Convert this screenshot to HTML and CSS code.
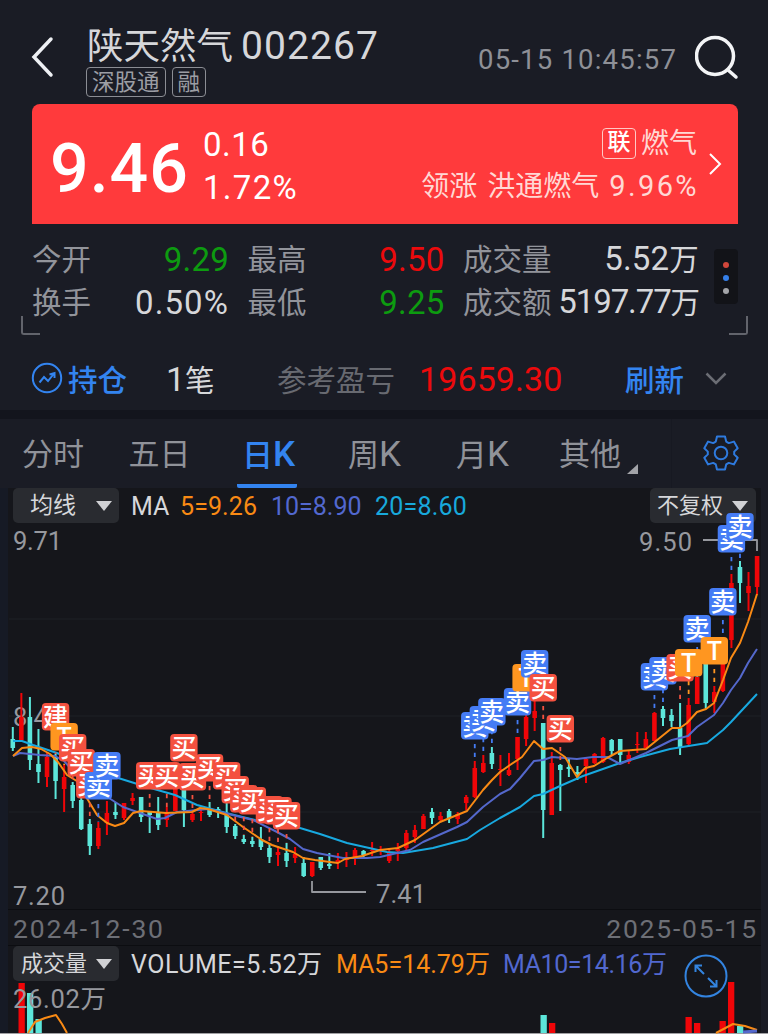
FILE: index.html
```html
<!DOCTYPE html>
<html lang="zh-CN">
<head>
  <meta charset="UTF-8" />
  <meta name="viewport" content="width=device-width, initial-scale=1.0"/>
  <title>陕天然气 002267</title>
  <link rel="stylesheet" href="styles.css">
</head>
<body>
  <header class="header">
    <svg class="back" width="24" height="42" viewBox="0 0 24 42"><path d="M20 3L3 21L20 39"/></svg>
    <div class="stock">
      <div class="stock-name">陕天然气<span class="code">002267</span></div>
      <div class="badges"><span class="badge">深股通</span><span class="badge">融</span></div>
    </div>
    <div class="time">05-15 10:45:57</div>
    <svg class="search" width="46" height="46" viewBox="0 0 46 46"><circle cx="20" cy="21" r="18.5"/><path d="M33 35L41 42"/></svg>
  </header>

  <section class="price-card">
    <div class="price">9.46</div>
    <div class="change"><div>0.16</div><div class="percent">1.72%</div></div>
    <div class="sector">
      <div class="sector-name"><span class="link-badge">联</span>燃气</div>
      <div class="leader"><span>领涨</span><span>洪通燃气</span><span class="leader-rate">9.96%</span></div>
    </div>
    <svg class="card-arrow" width="14" height="24" viewBox="0 0 14 24"><path d="M2 2L12 12L2 22"/></svg>
  </section>

  <section class="stats">
    <div class="stat"><span>今开</span><b class="green">9.29</b></div>
    <div class="stat"><span>最高</span><b class="red">9.50</b></div>
    <div class="stat"><span>成交量</span><b>5.52<i>万</i></b></div>
    <div class="stat"><span>换手</span><b class="rate">0.50%</b></div>
    <div class="stat"><span>最低</span><b class="green">9.25</b></div>
    <div class="stat"><span>成交额</span><b class="amount">5197.77<i>万</i></b></div>
    <div class="dots"><i></i><i></i><i></i></div>
    <div class="corner left"></div>
    <div class="corner right"></div>
  </section>

  <section class="position">
    <svg class="trend" width="32" height="32" viewBox="0 0 32 32"><circle cx="16" cy="16" r="14.2"/><path d="M8.5 20.5L13 15L17 19L23 11.5M18.5 12.5L23.5 11L23.5 16"/></svg>
    <span class="hold">持仓</span>
    <span class="count"><b>1</b>笔</span>
    <span class="profit-label">参考盈亏</span>
    <span class="profit">19659.30</span>
    <span class="refresh">刷新</span>
    <svg class="down" width="22" height="13" viewBox="0 0 22 13"><path d="M1.5 1.5L11 11L20.5 1.5"/></svg>
  </section>

  <nav class="tabs">
    <span class="tab">分时</span>
    <span class="tab">五日</span>
    <span class="tab active">日<b>K</b></span>
    <span class="tab">周<b>K</b></span>
    <span class="tab">月<b>K</b></span>
    <span class="tab more">其他</span>
    <svg class="gear" width="36" height="36" viewBox="0 0 36 36">
      <path d="M14 1.5H22L23.200 6.6L25.800 8.1L30.900 6.6L34.700 13.2L31.200 16.600V19.400L34.700 22.800L30.900 29.400L25.800 27.900L23.200 29.400L22 34.500H14L12.800 29.400L10.200 27.900L5.100 29.400L1.300 22.800L4.800 19.400V16.600L1.300 13.200L5.100 6.600L10.200 8.1L12.800 6.600Z"/>
      <circle cx="18" cy="18" r="6.3"/>
    </svg>
  </nav>

  <main class="charts">
    <section class="kline">
      <svg id="kline" width="768" height="421" viewBox="0 488 768 421"></svg>
      <div class="toolbar">
        <span class="select">均线</span>
        <span class="ma">MA</span>
        <span class="ma5">5=9.26</span>
        <span class="ma10">10=8.90</span>
        <span class="ma20">20=8.60</span>
        <span class="select adjust">不复权</span>
      </div>
      <svg id="marks" width="768" height="421" viewBox="0 488 768 421"></svg>
    </section>
    <div class="dates"><span>2024-12-30</span><span>2025-05-15</span></div>
    <section class="volume">
      <svg id="volume" width="768" height="88" viewBox="0 946 768 88"></svg>
      <div class="toolbar">
        <span class="select vol">成交量</span>
        <span class="v">VOLUME=5.52万</span>
        <span class="v5">MA5=14.79万</span>
        <span class="v10">MA10=14.16万</span>
      </div>
      <svg class="expand" width="44" height="44" viewBox="0 0 44 44"><circle cx="22" cy="22" r="20.5"/><path d="M20 20L11.5 11.5M11.5 18V11.5H18M24 24L32.5 32.5M32.5 26V32.5H26"/></svg>
    </section>
  </main>

  <script src="chart.js"></script>
</body>
</html>
```
FILE: styles.css
```css
* {
  box-sizing: border-box;
}
body {
  margin: 0;
  width: 768px;
  height: 1034px;
  overflow: hidden;
  background: #1a1c25;
  color: #d6d7da;
  font-family: Roboto, "Noto Sans CJK SC", sans-serif;
}
svg {
  display: block;
  fill: none;
}
b, i {
  font-weight: inherit;
  font-style: normal;
}
.header {
  display: flex;
  height: 104px;
  padding-left: 31px;
}
.back {
  margin-top: 36px;
  stroke: #eef0f4;
  stroke-width: 3.5;
  stroke-linecap: round;
}
.stock {
  margin-left: 31px;
  width: 392px;
  padding-top: 24px;
  white-space: nowrap;
}
.stock-name {
  height: 43px;
  line-height: 44px;
  padding-left: 1px;
  font-size: 36.5px;
}
.code {
  margin-left: 8px;
  font-size: 39px;
  letter-spacing: 1.1px;
}
.badges {
  display: flex;
  gap: 6px;
}
.badge {
  height: 30px;
  line-height: 28px;
  padding: 0 5px;
  border: 1.5px solid #8b8d94;
  border-radius: 4px;
  font-size: 22.5px;
  color: #9c9ea4;
}
.time {
  width: 217px;
  padding-top: 43px;
  line-height: 34px;
  font-size: 27.5px;
  letter-spacing: 1.2px;
  color: #8e9097;
  white-space: nowrap;
}
.search {
  margin-top: 35px;
  stroke: #f3f4f6;
  stroke-width: 3.5;
  stroke-linecap: round;
}
.price-card {
  display: flex;
  height: 120px;
  margin: 0 30px 0 32px;
  padding-left: 18px;
  border-radius: 8px 8px 0 0;
  background: #ff3a3c;
  color: #fff;
}
.price {
  width: 153px;
  padding-top: 5px;
  line-height: 120px;
  font-size: 68px;
  font-weight: 500;
  letter-spacing: 1px;
}
.change {
  padding-top: 19px;
  width: 140px;
  font-size: 33px;
  line-height: 43px;
  letter-spacing: 0.5px;
}
.percent {
  letter-spacing: 1.3px;
}
.sector {
  width: 354px;
  padding-top: 18px;
  font-size: 28px;
  line-height: 45px;
  color: #ffd8d4;
  white-space: nowrap;
}
.sector-name {
  display: flex;
  justify-content: flex-end;
  align-items: center;
  height: 42px;
}
.link-badge {
  width: 34px;
  height: 31px;
  margin-right: 5px;
  border: 1.5px solid #ffc9c5;
  border-radius: 4px;
  text-align: center;
  line-height: 27px;
  font-size: 23px;
  font-weight: 500;
  color: #fff;
}
.leader {
  display: flex;
  justify-content: flex-end;
  gap: 10px;
}
.leader-rate {
  margin-right: -2px;
  font-size: 29px;
  letter-spacing: 2.4px;
}
.card-arrow {
  margin: 48px 0 0 11px;
  stroke: #fff;
  stroke-width: 2;
}
.stats {
  position: relative;
  display: grid;
  grid-template-columns: 197px 197px 236px;
  grid-template-rows: 43px 43px;
  column-gap: 18.5px;
  height: 116px;
  padding: 14px 0 0 32px;
}
.stat {
  display: flex;
  justify-content: space-between;
  align-items: center;
  font-size: 29.5px;
  line-height: 43px;
  color: #92949b;
  white-space: nowrap;
}
.stat > span {
  padding-top: 1px;
}
.stat b {
  font-size: 33px;
  letter-spacing: 0.2px;
  color: #d6d7da;
}
.stat b i {
  font-size: 29.5px;
}
.stat .rate {
  letter-spacing: 1.1px;
}
.stat .amount {
  letter-spacing: -1.1px;
}
.stat .green {
  color: #0d9b10;
}
.stat .red, .profit {
  color: #ec0a0c;
}
.dots {
  position: absolute;
  left: 714px;
  top: 25px;
  width: 24px;
  height: 55px;
  padding-top: 13px;
  display: flex;
  flex-direction: column;
  align-items: center;
  gap: 7px;
  border-radius: 4px;
  background: #121318;
}
.dots i {
  width: 6px;
  height: 6px;
  border-radius: 50%;
  background: #d1473b;
}
.dots i:nth-child(2) {
  background: #357fe8;
}
.dots i:nth-child(3) {
  background: #a3a4a8;
}
.corner {
  position: absolute;
  bottom: 5px;
  width: 19px;
  height: 19px;
  border-bottom: 2px solid #62646c;
}
.corner.left {
  left: 21px;
  border-left: 2px solid #62646c;
  border-bottom-left-radius: 3px;
}
.corner.right {
  right: 20px;
  border-right: 2px solid #62646c;
  border-bottom-right-radius: 3px;
}
.position {
  display: flex;
  align-items: center;
  height: 70px;
  padding: 6px 0 0 31px;
  font-size: 29.5px;
  white-space: nowrap;
}
.trend {
  stroke: #3384f0;
  stroke-width: 2;
}
.hold {
  width: 98px;
  margin-left: 5px;
  font-weight: 500;
}
.hold, .refresh {
  color: #3384f0;
}
.count {
  width: 111px;
}
.count b {
  font-size: 34px;
}
.profit-label {
  width: 142px;
  color: #686a71;
}
.profit {
  width: 206px;
  padding-top: 2px;
  font-size: 34px;
  letter-spacing: 0.1px;
}
.refresh {
  width: 80px;
  font-weight: 500;
}
.down {
  stroke: #6b6d74;
  stroke-width: 2.5;
}
.tabs {
  display: flex;
  height: 78px;
  border-top: 9px solid #13151d;
  padding-left: 22px;
  font-size: 31px;
  line-height: 72px;
  color: #909299;
  white-space: nowrap;
}
.tab {
  width: 106.5px;
}
.tab b {
  font-size: 35px;
}
.tab.active {
  width: 60px;
  height: 69px;
  margin: 0 51px 0 2px;
  padding-left: 5px;
  border-bottom: 4px solid #3384f0;
  border-radius: 2px;
  font-weight: 500;
  color: #3384f0;
}
.tab:nth-child(4) {
  width: 108px;
}
.tab:nth-child(5) {
  width: 103px;
}
.tab.more {
  position: relative;
  width: 113px;
  border-right: 1px solid #171922;
}
.tab.more::after {
  content: "";
  position: absolute;
  left: 68px;
  top: 45px;
  border-left: 11px solid transparent;
  border-bottom: 10px solid #a2a3a8;
}
.gear {
  margin: 16px 0 0 31px;
  stroke: #2e7ade;
  stroke-width: 2;
  stroke-linejoin: round;
}
.charts {
  background: linear-gradient(90deg, #161a25 8px, #15161b 8px, #15161b 761px, #1a1c25 761px);
}
.kline {
  position: relative;
  height: 421px;
}
#kline, #marks, #volume {
  position: absolute;
  left: 0;
  top: 0;
  overflow: visible;
}
.toolbar {
  position: relative;
  display: flex;
  height: 36px;
  padding-left: 13px;
  font-size: 25px;
  line-height: 37px;
  white-space: nowrap;
}
.select {
  width: 106px;
  height: 35px;
  padding: 0 7px 0 17px;
  display: flex;
  align-items: center;
  justify-content: space-between;
  border-radius: 5px;
  background: #292b30;
  font-size: 23px;
  color: #d6d7da;
}
.select::after {
  content: "";
  border: 8.5px solid transparent;
  border-top: 10px solid #d0d1d4;
  border-bottom: 0;
}
.select.adjust {
  padding: 0 8px 0 7px;
  font-size: 22px;
}
.select.vol {
  padding-left: 8px;
  font-size: 22px;
}
.ma {
  width: 49px;
  margin-left: 12px;
}
.ma5 {
  width: 91px;
  letter-spacing: 0.1px;
  color: #f98a14;
}
.ma10 {
  width: 104px;
  color: #5268cf;
}
.ma20 {
  width: 275px;
  letter-spacing: 0.2px;
  color: #18a9dc;
}
.dates {
  display: flex;
  justify-content: space-between;
  height: 37px;
  margin: 0 7px 0 8px;
  padding: 0 3px 0 5px;
  border-top: 1.5px solid #0c0d11;
  border-bottom: 1.5px solid #0c0d11;
  font-size: 26.5px;
  line-height: 38px;
  letter-spacing: 1.8px;
  color: #6d6f76;
}
.volume {
  position: relative;
  height: 88px;
  border-bottom: 1px solid #a0a0a3;
}
.v {
  width: 205px;
  margin-left: 12px;
  letter-spacing: 0.5px;
}
.v5 {
  width: 167px;
  color: #f98a14;
}
.v10 {
  letter-spacing: -0.4px;
  color: #5268cf;
}
.expand {
  position: absolute;
  left: 684px;
  top: 8px;
  stroke: #3384e0;
  stroke-width: 2;
}
.axis {
  font-size: 25.5px;
  fill: #96989e;
}
.tag-text {
  font-size: 25px;
  font-weight: 500;
  fill: #fff;
  text-anchor: middle;
}
```
FILE: chart.js
```js
const RED = '#f00508';
const CYAN = '#5ce6da';
const x = i => 12.8 + i * 8.555;

// [direction, high, body top, body bottom, low]
const candles = [
  ['c',727,739,748,751], ['r',693,717,740,740], ['c',697,717,760,770], ['c',729,764,772,783],
  ['r',753,757,777,787], ['c',754,757,781,799], ['r',765,777,789,812], ['c',782,785,801,808],
  ['c',797,800,829,830], ['c',819,824,846,855], ['r',822,828,846,849], ['r',801,813,823,835],
  ['c',802,812,815,819], ['r',803,803,818,820], ['r',793,798,801,805], ['c',797,797,817,822],
  ['c',811,812,815,833], ['c',797,812,825,830], ['r',807,812,820,827], ['r',785,785,811,811],
  ['c',788,788,810,827], ['r',813,814,820,822], ['r',809,812,813,821], ['c',802,810,815,817],
  ['c',807,809,811,818], ['c',803,815,827,833], ['c',824,826,836,839], ['c',835,839,842,844],
  ['c',837,841,844,847], ['c',827,839,847,850], ['c',844,848,857,863], ['r',846,852,855,866],
  ['c',843,853,861,867], ['r',847,854,858,863], ['c',857,863,876,877], ['r',862,862,876,877],
  ['c',857,857,868,870], ['c',853,864,866,869], ['r',853,860,862,869], ['r',852,858,860,867],
  ['r',848,850,858,865], ['c',850,851,855,858], ['r',842,850,851,856], ['r',846,850,851,855],
  ['r',848,853,861,863], ['r',843,849,851,861], ['r',830,833,848,850], ['r',825,830,837,843],
  ['r',814,816,829,829], ['c',808,812,818,824], ['r',812,816,820,822], ['c',809,811,818,823],
  ['r',812,814,819,824], ['r',795,797,803,810], ['r',761,768,797,798], ['r',755,763,772,773],
  ['c',747,753,764,769], ['r',755,769,770,786], ['r',753,770,775,776], ['r',737,737,759,770],
  ['r',715,717,739,746], ['r',700,711,718,731], ['c',723,723,810,838], ['r',752,763,815,815],
  ['c',764,765,770,811], ['c',758,767,769,777], ['c',766,772,774,780], ['r',758,759,766,783],
  ['r',753,754,763,764], ['r',737,738,762,763], ['c',739,740,751,756], ['c',739,739,755,764],
  ['r',751,755,762,764], ['r',732,744,745,753], ['r',732,739,748,748], ['r',712,713,741,741],
  ['c',706,709,718,726], ['c',709,715,721,727], ['c',703,728,748,755], ['r',698,705,744,747],
  ['r',677,677,704,704], ['c',663,663,703,708], ['r',686,692,702,713], ['r',663,663,691,692],
  ['r',574,583,640,648], ['c',561,567,583,603], ['r',572,586,593,611], ['r',556,556,587,595]
];

const ma5 = '13,756 22,748 32,747 41,749 50,754 58,762 67,775 80,783 85,795 97,815 107,823 115,826 124,823 133,813 141,811 166,813 192,812 200,808 208,809 227,815 243,827 262,840 272,845 293,852 303,858 315,860 330,862 338,863 345,859 362,856 380,850 398,848 415,840 440,822 467,811 483,790 492,780 500,772 510,765 522,757 534,741 543,749 552,748 565,757 577,777 585,768 594,766 607,758 620,751 646,749 672,728 680,728 687,723 697,712 706,709 714,703 723,680 731,658 740,643 748,622 757,594';
const ma10 = '13,756 20,753 40,755 55,756 64,761 80,779 112,800 123,807 140,813 157,819 165,818 177,812 208,809 253,820 277,832 290,839 303,849 317,853 343,858 367,858 380,857 410,850 423,842 457,827 467,822 483,807 500,794 510,789 520,778 534,761 543,760 552,757 577,759 593,757 607,757 620,764 646,753 672,740 688,736 697,727 714,715 723,703 731,690 740,678 748,663 757,649';
const ma20 = '13,741 22,741 33,745 57,753 115,777 147,787 175,795 197,805 230,814 255,820 300,828 320,834 347,843 387,852 403,853 433,848 467,839 480,830 500,818 520,807 534,796 543,794 560,786 583,776 620,763 640,757 670,749 707,743 723,730 731,722 757,694';

// [candle index, top, label]
const tags = [
  [5,703,'建'], [6,723,'T'], [7,734,'买'], [8,749,'买'], [9,771,'买'], [10,772,'卖'], [11,752,'卖'],
  [16,762,'买'], [18,762,'买'], [20,734,'买'], [21,763,'买'], [23,754,'买'], [25,762,'买'], [26,776,'买'],
  [27,785,'买'], [28,787,'买'], [30,796,'买'], [31,797,'买'], [32,802,'买'],
  [54,712,'卖'], [55,706,'卖'], [56,698,'卖'], [59,688,'卖'], [60,664,'T'], [61,650,'卖'], [62,674,'买'], [64,715,'买'],
  [75,663,'卖'], [76,657,'卖'], [78,654,'买'], [79,649,'T'], [80,615,'卖'], [82,637,'T'], [83,588,'卖'], [84,525,'卖'], [85,513,'卖']
];
const tagColors = { '建': '#f4513f', '买': '#f4513f', '卖': '#457cf5', 'T': '#ff9620' };

function line(x1, y1, x2, y2, color, width, dash) {
  return `<line x1="${x1}" y1="${y1}" x2="${x2}" y2="${y2}" stroke="${color}" stroke-width="${width}" stroke-dasharray="${dash || 'none'}"/>`;
}
function curve(points, color, width) {
  return `<polyline points="${points}" stroke="${color}" stroke-width="${width}" stroke-linejoin="round"/>`;
}
function label(tx, ty, width, text) {
  return `<text class="axis" x="${tx}" y="${ty}" textLength="${width}">${text}</text>`;
}

function drawKline() {
  let out = '';
  [619, 716, 812].forEach(y => out += line(9, y, 761, y, '#1f2126', 1));
  out += label(13, 550, 49, '9.71') + label(13, 726, 49, '8.46') + label(13, 905, 52, '7.20');
  out += label(639, 551, 53, '9.50') + label(376, 903, 50, '7.41');
  candles.forEach(([dir, high, top, bottom, low], i) => {
    const color = dir === 'r' ? RED : CYAN;
    out += line(x(i), high, x(i), low, color, 2);
    out += line(x(i), top, x(i), bottom, color, 4.6);
  });
  out += curve(ma20, '#18a9e0', 2) + curve(ma10, '#5468cc', 2) + curve(ma5, '#f98a14', 2);
  out += curve('312,881 312,892 366,892', '#96989e', 1.8);
  out += curve('703,540 757,540 757,551', '#96989e', 1.8);
  document.getElementById('kline').innerHTML = out;
}

function drawMarks() {
  let out = '';
  tags.forEach(([i, top, text]) => {
    const color = tagColors[text];
    if (candles[i][1] > top + 32) out += line(x(i), top + 32, x(i), candles[i][1], color, 1.8, '4.3 4.5');
  });
  tags.forEach(([i, top, text]) => {
    out += `<rect x="${x(i) - 13.7}" y="${top}" width="27.4" height="27.4" rx="4" fill="${tagColors[text]}"/>`;
    out += `<text class="tag-text" x="${x(i)}" y="${top + 22.7}">${text}</text>`;
  });
  document.getElementById('marks').innerHTML = out;
}

function drawVolume() {
  const bars = [
    [18.5,983,RED], [27,993,CYAN], [35.5,1019,CYAN], [540.5,1015,CYAN], [549,1023,RED],
    [685.5,1017,RED], [694,1023,RED], [719.5,1021,RED], [728,982,RED], [737,1026,CYAN]
  ];
  let out = '';
  bars.forEach(([bx, y, color]) => out += `<rect x="${bx}" y="${y}" width="6.3" height="${1033 - y}" fill="${color}"/>`);
  out += curve('28,1033 35,1022 45,1018 56,1015 62,1024 67,1033', '#f98a14', 2);
  out += curve('716,1033 733,1024 745,1026 757,1030', '#f98a14', 2);
  out += curve('743,1032 757,1031', '#5468cc', 3);
  out += label(13, 1008, 93, '26.02万');
  document.getElementById('volume').innerHTML = out;
}

drawKline();
drawMarks();
drawVolume();
```
